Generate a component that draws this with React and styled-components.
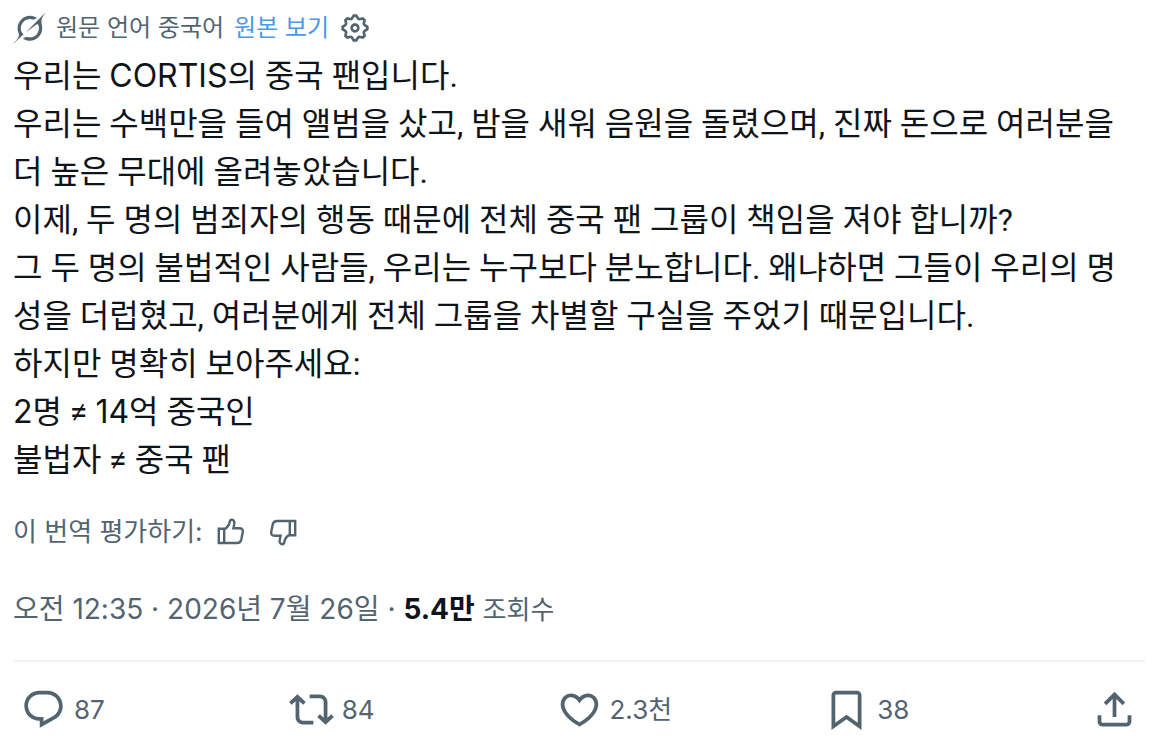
import React from "react";
import styled, { createGlobalStyle } from "styled-components";

const paragraphs = [
  "우리는 CORTIS의 중국 팬입니다.",
  "우리는 수백만을 들여 앨범을 샀고, 밤을 새워 음원을 돌렸으며, 진짜 돈으로 여러분을 더 높은 무대에 올려놓았습니다.",
  "이제, 두 명의 범죄자의 행동 때문에 전체 중국 팬 그룹이 책임을 져야 합니까?",
  "그 두 명의 불법적인 사람들, 우리는 누구보다 분노합니다. 왜냐하면 그들이 우리의 명성을 더럽혔고, 여러분에게 전체 그룹을 차별할 구실을 주었기 때문입니다.",
  "하지만 명확히 보아주세요:",
  "2명 ≠ 14억 중국인",
  "불법자 ≠ 중국 팬",
];

const GROK =
  "M12.745 20.54l10.97-8.19c.539-.4 1.307-.244 1.564.38 1.349 3.288.746 7.241-1.938 9.955-2.683 2.714-6.417 3.31-9.83 1.954l-3.728 1.745c5.347 3.697 11.84 2.782 15.898-1.324 3.219-3.255 4.216-7.692 3.284-11.693l.008.009c-1.351-5.878.332-8.227 3.782-13.031L33 0l-4.54 4.59v-.014L12.743 20.544m-2.263 1.987c-3.837-3.707-3.175-9.446.1-12.755 2.42-2.449 6.388-3.448 9.852-1.979l3.72-1.737c-.67-.49-1.53-1.017-2.515-1.387-4.455-1.854-9.789-.931-13.41 2.728-3.483 3.523-4.579 8.94-2.697 13.561 1.405 3.454-.899 5.898-3.22 8.364C1.49 30.2.666 31.074 0 32l10.478-9.466";
const GEAR =
  "M10.54 1.75h2.92l1.57 2.36c.11.17.32.25.53.21l2.53-.59 2.17 2.17-.58 2.54c-.05.2.04.41.21.53l2.36 1.57v2.92l-2.36 1.57c-.17.12-.26.33-.21.53l.58 2.54-2.17 2.17-2.53-.59c-.21-.04-.42.04-.53.21l-1.57 2.36h-2.92l-1.58-2.36c-.11-.17-.32-.25-.52-.21l-2.54.59-2.17-2.17.58-2.54c.05-.2-.03-.41-.21-.53l-2.35-1.57v-2.92L4.1 8.97c.18-.12.26-.33.21-.53L3.73 5.9 5.9 3.73l2.54.59c.2.04.41-.04.52-.21l1.58-2.36zm1.07 2l-.98 1.47C10.05 6.08 9 6.5 7.99 6.27l-1.46-.34-.6.6.33 1.46c.24 1.01-.18 2.07-1.05 2.64l-1.46.98v.78l1.46.98c.87.57 1.29 1.63 1.05 2.64l-.33 1.46.6.6 1.46-.34c1.01-.23 2.06.19 2.64 1.05l.98 1.47h.78l.97-1.47c.58-.86 1.63-1.28 2.65-1.05l1.45.34.61-.6-.34-1.46c-.23-1.01.18-2.07 1.05-2.64l1.47-.98v-.78l-1.47-.98c-.87-.57-1.28-1.63-1.05-2.64l.34-1.46-.61-.6-1.45.34c-1.02.23-2.07-.19-2.65-1.05l-.97-1.47h-.78zM12 10.5c-.83 0-1.5.67-1.5 1.5s.67 1.5 1.5 1.5c.82 0 1.5-.67 1.5-1.5s-.68-1.5-1.5-1.5zM8.5 12c0-1.93 1.56-3.5 3.5-3.5 1.93 0 3.5 1.57 3.5 3.5s-1.57 3.5-3.5 3.5c-1.94 0-3.5-1.57-3.5-3.5z";
const REPLY =
  "M1.751 10c0-4.42 3.584-8 8.005-8h4.366c4.49 0 8.129 3.64 8.129 8.13 0 2.96-1.607 5.68-4.196 7.11l-8.054 4.46v-3.69h-.067c-4.49.1-8.183-3.51-8.183-8.01zm8.005-6c-3.317 0-6.005 2.69-6.005 6 0 3.37 2.77 6.08 6.138 6.01l.351-.01h1.761v2.3l5.087-2.81c1.951-1.08 3.163-3.13 3.163-5.36 0-3.39-2.744-6.13-6.129-6.13H9.756z";
const REPOST =
  "M4.5 3.88l4.432 4.14-1.364 1.46L5.5 7.55V16c0 1.1.896 2 2 2H13v2H7.5c-2.209 0-4-1.79-4-4V7.55L1.432 9.48.068 8.02 4.5 3.88zM16.5 6H11V4h5.5c2.209 0 4 1.79 4 4v8.45l2.068-1.93 1.364 1.46-4.432 4.14-4.432-4.14 1.364-1.46 2.068 1.93V8c0-1.1-.896-2-2-2z";
const LIKE =
  "M16.697 5.5c-1.222-.06-2.679.51-3.89 2.16l-.805 1.09-.806-1.09C9.984 6.01 8.526 5.44 7.304 5.5c-1.243.07-2.349.78-2.91 1.91-.552 1.12-.633 2.78.479 4.82 1.074 1.97 3.257 4.27 7.129 6.61 3.87-2.34 6.052-4.64 7.126-6.61 1.111-2.04 1.03-3.7.477-4.82-.561-1.13-1.666-1.84-2.908-1.91zm4.187 7.69c-1.351 2.48-4.001 5.12-8.379 7.67l-.503.3-.504-.3c-4.379-2.55-7.029-5.19-8.382-7.67-1.36-2.5-1.41-4.86-.514-6.67.887-1.79 2.647-2.91 4.601-3.01 1.651-.09 3.368.56 4.798 2.01 1.429-1.45 3.146-2.1 4.796-2.01 1.954.1 3.714 1.22 4.601 3.01.896 1.81.846 4.17-.514 6.67z";
const BOOKMARK =
  "M4 4.5C4 3.12 5.119 2 6.5 2h11C18.881 2 20 3.12 20 4.5v18.44l-8-5.71-8 5.71V4.5zM6.5 4c-.276 0-.5.22-.5.5v14.56l6-4.29 6 4.29V4.5c0-.28-.224-.5-.5-.5h-11z";
const SHARE =
  "M12 2.59l5.7 5.7-1.41 1.42L13 6.41V16h-2V6.41l-3.3 3.3-1.41-1.42L12 2.59zM21 15l-.02 3.51c0 1.38-1.12 2.49-2.5 2.49H5.5C4.11 21 3 19.88 3 18.5V15h2v3.5c0 .28.22.5.5.5h12.98c.28 0 .5-.22.5-.5L19 15h2z";

const actions = [
  { label: "답글", icon: REPLY, count: "87" },
  { label: "재게시", icon: REPOST, count: "84" },
  { label: "마음에 들어요", icon: LIKE, count: "2.3천" },
  { label: "북마크", icon: BOOKMARK, count: "38" },
  { label: "공유", icon: SHARE },
];

const Thumb = () => (
  <ThumbIcon viewBox="0 0 28 28" aria-hidden="true">
    <path d="M1.8 10.8h5.4v14.2H1.8zM7.2 11.4c3.2-1.6 4.9-4.2 5.5-7.3.3-1.7 1.2-2.5 2.5-2.3 1.8.3 2.5 2 2.1 4.1l-.9 4.3h6.2c2.2 0 3.6 1.6 3.2 3.7l-1.5 7.5c-.5 2.2-1.9 3.6-4.2 3.6H7.2" />
  </ThumbIcon>
);

// latin words and numbers get their own face inside korean text
const MixedText = ({ children }) =>
  children
    .split(/([A-Z0-9]+)/)
    .map((part, i) => (i % 2 ? <Latin key={i}>{part}</Latin> : part));

const App = () => {
  return (
    <>
      <GlobalStyle />
      <Post>
        <TranslationBar>
          <GrokIcon viewBox="0 0 33 32" aria-hidden="true">
            <path d={GROK} />
          </GrokIcon>
          <span>원문 언어 중국어</span>
          <OriginalLink href="#original">원본 보기</OriginalLink>
          <IconButton aria-label="번역 설정">
            <GearIcon viewBox="0 0 24 24" aria-hidden="true">
              <path d={GEAR} />
            </GearIcon>
          </IconButton>
        </TranslationBar>

        <Body>
          {paragraphs.map((text) => (
            <p key={text}>
              <MixedText>{text}</MixedText>
            </p>
          ))}
        </Body>

        <Rating>
          <span>이 번역 평가하기:</span>
          <RatingButtons>
            <IconButton aria-label="좋은 번역">
              <Thumb />
            </IconButton>
            <IconButton aria-label="나쁜 번역" $flipped>
              <Thumb />
            </IconButton>
          </RatingButtons>
        </Rating>

        <Meta>
          <time>오전 12:35 · 2026년 7월 26일</time> · <Views>5.4만</Views>{" "}
          <ViewsLabel>조회수</ViewsLabel>
        </Meta>

        <Actions>
          {actions.map(({ label, icon, count }) => (
            <ActionCell key={label}>
              <ActionButton aria-label={label}>
                <ActionIcon viewBox="0 0 24 24" aria-hidden="true">
                  <path d={icon} />
                </ActionIcon>
                {count && <span>{count}</span>}
              </ActionButton>
            </ActionCell>
          ))}
        </Actions>
      </Post>
    </>
  );
};

const GlobalStyle = createGlobalStyle`
  * {
    box-sizing: border-box;
  }
  body {
    margin: 0;
    background: #fff;
    color: #0f1419;
    font-family: Inter, "Noto Sans CJK KR", sans-serif;
  }
  p {
    margin: 0;
  }
  button {
    padding: 0;
    border: 0;
    background: none;
    color: inherit;
    font: inherit;
    cursor: pointer;
  }
  svg {
    display: block;
    flex-shrink: 0;
    fill: currentColor;
  }
`;

const Post = styled.article`
  padding: 12px 19px 0 13px;
`;
const TranslationBar = styled.div`
  display: flex;
  align-items: center;
  gap: 10px;
  color: #536471;
  font-size: 24px;
  line-height: 32px;
`;
const OriginalLink = styled.a`
  color: #4a99e9;
  text-decoration: none;
`;
const GrokIcon = styled.svg`
  width: 33px;
  height: 32px;
`;
const GearIcon = styled.svg`
  width: 32px;
  height: 32px;
`;
const IconButton = styled.button`
  transform: ${(props) => (props.$flipped ? "rotate(180deg)" : "none")};
`;
const Latin = styled.span`
  font-family: Inter, "Noto Sans CJK KR", sans-serif;
  line-height: 1;
`;
const Body = styled.div`
  margin-top: 8px;
  font-family: Roboto, "Noto Sans CJK KR", sans-serif;
  font-size: 32px;
  line-height: 48px;
`;
const Rating = styled.div`
  display: flex;
  align-items: center;
  gap: 14px;
  margin-top: 32px;
  color: #536471;
  font-size: 26px;
  line-height: 32px;
`;
const RatingButtons = styled.div`
  display: flex;
  gap: 24px;
`;
const ThumbIcon = styled.svg`
  width: 28px;
  height: 28px;

  path {
    fill: none;
    stroke: currentColor;
    stroke-width: 2.4;
  }
`;
const Meta = styled.div`
  margin-top: 41px;
  color: #536471;
  font-size: 28px;
  line-height: 40px;
`;
const Views = styled.strong`
  color: #0f1419;
  font-weight: 700;
`;
const ViewsLabel = styled.span`
  font-size: 26px;
  line-height: 1;
`;
const Actions = styled.div`
  display: flex;
  margin-top: 31px;
  padding: 25px 8px 0;
  border-top: 2px solid #eff3f4;
`;
const ActionCell = styled.div`
  flex: 1;

  &:last-child {
    flex: none;
  }
`;
const ActionButton = styled.button`
  display: flex;
  align-items: center;
  gap: 8px;
  color: #536471;
  font-size: 26px;
  line-height: 45px;
`;
const ActionIcon = styled.svg`
  width: 45px;
  height: 45px;
`;

export default App;
